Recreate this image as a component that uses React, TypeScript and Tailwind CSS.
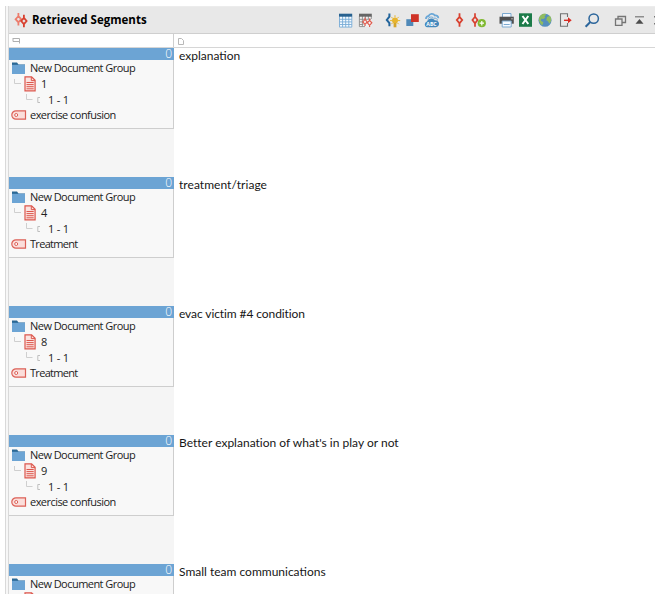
import React from "react";

type IconProps = { className?: string; children: React.ReactNode };

function Icon({ className = "", children }: IconProps) {
  return (
    <svg viewBox="0 0 16 16" fill="none" className={`h-4 w-4 shrink-0 ${className}`}>
      {children}
    </svg>
  );
}

const RED = "#d8402f";

function LogoIcon() {
  return (
    <Icon className="ml-[5px]">
      <path d="M4.4 1v3.4M4.4 10.2v3.4M4.4 4.2 7.2 7.2l-2.8 3.2-2.8-3.2z" stroke="#ec7c6c" strokeWidth="1.8" />
      <path d="M9.9 2.8v3.2M9.9 12.2v3M9.9 5.9l2.7 3.1-2.7 3.2L7.2 9z" stroke={RED} strokeWidth="1.8" />
    </Icon>
  );
}

function Toolbar() {
  return (
    <div className="flex h-[28px] items-center border-y border-t-[#ececec] border-b-[#cfcfcf] bg-[#e8e8e8]">
      <LogoIcon />
      <h1 className="ml-[2px] w-[306px] whitespace-nowrap text-[11.5px] leading-none font-bold text-black">
        <span className="tracking-[0.01px]">Retrieved Segments</span>
      </h1>
      <Icon>
        <path d="M1.5 2h12.3v13H1.5z" fill="#f5faff" />
        <path d="M1.5 4.5v10.6h12.3V4.5M4.6 4v11M7.7 4v11M10.8 4v11M1.5 7.3h12.3M1.5 9.9h12.3M1.5 12.5h12.3" stroke="#78abd6" strokeWidth=".9" />
        <path d="M1 1.7h13.2v3H1z" fill="#28618f" />
      </Icon>
      <Icon className="ml-[4px]">
        <path d="M1.4 2h12v12.6h-12z" fill="#f2f2f2" />
        <path d="M1.4 4v10.6H7M4.4 4v10.6M7.4 4v4M10.4 4v3M13.3 4v3M1.4 7.3H13M1.4 9.9h4M1.4 12.5h4" stroke="#8b8b8b" strokeWidth=".9" />
        <path d="M1 1.7h12.8v3H1z" fill="#666" />
        <path d="M7 5.5v2M7 12v2M7 7.4l2.2 2.5L7 12.4 4.8 9.9zM11.6 6.5v2M11.6 13v2M11.6 8.3l2.2 2.5-2.2 2.5-2.2-2.5z" stroke="#e15b4d" strokeWidth="1.2" />
      </Icon>
      <Icon className="ml-[11px]">
        <path d="M4.4 1.5v3.2L1.8 8l2.6 3v3.3" stroke="#22649b" strokeWidth="2" />
        <circle cx="10" cy="8.6" r="3" fill="#e7b52f" />
        <path d="M8.6 11h2.8v4.3H8.6z" fill="#d4a52b" />
        <path d="M10 3.2v2M5 8.6h2M13 8.6h2.2M6.3 4.9l1.4 1.4M13.7 4.9l-1.4 1.4M6.3 12.2l1.3-1.3M13.7 12.2l-1.3-1.3" stroke="#e7b52f" />
      </Icon>
      <Icon className="ml-[3px]">
        <path d="M2.3 7.2h7V14h-7z" fill="#5089b8" />
        <path d="M7 2.2h7.8V10H7z" fill="#cf3327" />
      </Icon>
      <Icon className="ml-[4px]">
        <path d="M2 7C1.8 5 3.2 4 4.5 4.3 5.4 1.4 9.3 1 10.8 3.4c2-.4 3.6 1 3.5 2.9" stroke="#6aa7d7" strokeWidth="1.8" />
        <path d="M3.2 15.2C.2 15.2-.1 10.4 3 9.4 4 6.4 8.7 5.2 10.8 8.2c5.4-.4 5.6 7 1 7z" fill="#4589bd" />
        <path d="M4 7.5c.7-3 4.6-3 5.5-1.3 2.5-.5 4 .8 4 2.3" stroke="#6aa7d7" />
        <text x="2.3" y="13.7" fontSize="5.2" fontWeight="700" fill="white" fontFamily="Open Sans, sans-serif">ABC</text>
      </Icon>
      <Icon className="ml-[12px]">
        <path d="M7.5 1.3v3.8M7.5 10.8v3.9M7.5 4.8 10.2 8l-2.7 3.3L4.8 8z" stroke={RED} strokeWidth="1.8" />
      </Icon>
      <Icon className="ml-[3px]">
        <path d="M4 1.3v3.8M4 10.8v3.9M4 4.8 6.6 8 4 11.3 1.4 8z" stroke={RED} strokeWidth="1.7" />
        <circle cx="10.8" cy="11.2" r="4.1" fill="#80b932" />
        <path d="M8.6 11.2H13M10.8 9v4.4" stroke="white" strokeWidth="1.2" />
      </Icon>
      <Icon className="ml-[12px]">
        <path d="M3.5 1.5h8.5v4H3.5z" fill="#f4f9ff" stroke="#7ba9cf" />
        <path d="M.5 4.7h14.3v7H.5z" fill="#505050" />
        <path d="M3.2 9h9v6h-9z" fill="#f6faff" stroke="#7ba9cf" />
        <path d="M4.7 12.5h6" stroke="#7ba9cf" />
        <path d="M12.5 6.8h1" stroke="white" />
      </Icon>
      <Icon className="ml-[4px]">
        <path d="M0 1.3h13v13.5H0z" fill="#1c7b49" />
        <path d="m3.5 4 5.8 8M9.3 4l-5.8 8" stroke="white" strokeWidth="2" />
      </Icon>
      <Icon className="ml-[2px]">
        <circle cx="8" cy="8.3" r="6.5" fill="#558fbe" />
        <path d="M3 4c2-2.5 4.8-2.6 6.2-1.8L7.5 4.4l.8 1.3-2 1.4-2-.4-.4 2 2.5 1.5-1 3C2.7 12.3.5 7.5 3 4M10 5l3-1.2c1.8 2.4 1.6 5.6-.5 8L10.7 9l-1.4-.8z" fill="#91bc60" />
      </Icon>
      <Icon className="ml-[4px]">
        <path d="M10.5 5V1.8h-7v12.4h7V11" stroke="#707070" strokeWidth="1.1" />
        <path d="M7 8.3h5" stroke="#d92c23" strokeWidth="1.4" />
        <path d="m11 5.3 3.7 3L11 11.3z" fill="#d92c23" />
      </Icon>
      <Icon className="ml-[11px]">
        <circle cx="9.7" cy="6.6" r="4.7" stroke="#2b659b" strokeWidth="1.5" />
        <path d="m6.3 10-4.7 4.8" stroke="#2b659b" strokeWidth="2" />
      </Icon>
      <Icon className="ml-[12px]">
        <path d="M6 7V4.5h7.5v6H10M3.5 7H10v6.3H3.5z" stroke="#757575" strokeWidth="1.3" />
      </Icon>
      <Icon className="ml-[4px]">
        <path d="M3 4.8h9" stroke="#777" strokeWidth="1.2" />
        <path d="m7.5 7 4 4.8h-8z" fill="#4c4c4c" />
      </Icon>
      <svg viewBox="0 0 2 16" className="ml-[5px] h-4 w-[2px] shrink-0">
        <path d="M1 4h1v1.5H1zM1 11h1v1.5H1z" fill="#777" />
      </svg>
    </div>
  );
}

function ColumnHeader() {
  return (
    <div className="flex h-[14px] border-b border-[#d6d6d6] bg-white">
      <div className="w-[165px] border-r border-[#cfcfcf] pl-[3px]">
        <svg viewBox="0 0 9 13" fill="none" className="h-[13px] w-[9px]">
          <path d="M1 4.5h6.5v5M1 4v3.5h6.5" stroke="#b0b0b0" />
        </svg>
      </div>
      <div className="pl-[3px]">
        <svg viewBox="0 0 9 13" fill="none" className="h-[13px] w-[9px]">
          <path d="M1.5 4.5h3l2 2v4h-5z" stroke="#b8b8b8" />
        </svg>
      </div>
    </div>
  );
}

type Segment = { doc?: string; code?: string; text: string; tracking: string };

const segments: Segment[] = [
  { doc: "1", code: "exercise confusion", text: "explanation", tracking: "tracking-normal" },
  { doc: "4", code: "Treatment", text: "treatment/triage", tracking: "tracking-[0.04px]" },
  { doc: "8", code: "Treatment", text: "evac victim #4 condition", tracking: "tracking-[-0.09px]" },
  { doc: "9", code: "exercise confusion", text: "Better explanation of what's in play or not", tracking: "tracking-[0.01px]" },
  { text: "Small team communications", tracking: "tracking-normal" },
];

function SegmentRow({ segment }: { segment: Segment }) {
  return (
    <div className="flex h-[129px] shrink-0">
      <div className="w-[165px] shrink-0 bg-[#f5f5f5]">
        <div className="h-[81px] border-r border-b border-[#cecece] bg-[#f8f8f8] text-[11px] leading-4 tracking-[-0.54px] text-[#222]">
          <div className="-mr-px h-3 bg-[#6ca4d4] pr-[2px] text-right text-[12px] leading-3 font-light tracking-normal text-white">0</div>
          <div className="flex h-4 items-center">
            <svg viewBox="0 0 14 12" className="ml-[3px] h-3 w-[14px]">
              <path d="M0 .6h5l1.5 1.9H13v3H0z" fill="#2a6895" />
              <path d="M0 2.8h13v9.2H0z" fill="#6ca4d4" />
            </svg>
            <span className="ml-[4px]">New Document Group</span>
          </div>
          <div className="flex h-4 items-center">
            <svg viewBox="0 0 7 12" fill="none" className="ml-[5px] h-3 w-[7px]">
              <path d="M.5 1v4.5H7" stroke="#cfcfcf" />
            </svg>
            <svg viewBox="0 0 12 16" fill="none" className="ml-[3px] h-4 w-3">
              <path d="M1 .8h6.6l3.5 3.5v10.5H1z" fill="#fbe3e0" stroke="#dc574d" strokeWidth="1.2" />
              <path d="M7.3 1v3.6H11M2.5 6.5h7.2M2.5 8.6h7.2M2.5 10.7h7.2M2.5 12.8h7.2" stroke="#dc574d" />
            </svg>
            {segment.doc && <span className="ml-[5px]">{segment.doc}</span>}
          </div>
          {segment.code && (
            <>
              <div className="flex h-4 items-center">
                <svg viewBox="0 0 7 14" fill="none" className="ml-[17px] h-[14px] w-[7px]">
                  <path d="M.5 1v5.5h6" stroke="#cfcfcf" />
                </svg>
                <svg viewBox="0 0 4 8" fill="none" className="ml-[4px] h-2 w-1">
                  <path d="M3 1.5H.8v5H3" stroke="#b9b9b9" strokeWidth=".9" />
                </svg>
                <span className="ml-[7px] tracking-[-0.2px]">1 - 1</span>
              </div>
              <div className="-mt-px flex h-4 items-center">
                <svg viewBox="0 0 16 12" fill="none" className="ml-[2px] h-3 w-4">
                  <path d="M14.5 1.8v8.4H5a4.2 4.2 0 0 1 0-8.4z" fill="#fbdedb" stroke="#dc6057" strokeWidth="1.2" />
                  <circle cx="5.2" cy="6" r="1.5" fill="white" stroke="#dc6057" />
                </svg>
                <span className={segment.code === "Treatment" ? "ml-[3px] tracking-[-0.7px]" : "ml-[3px]"}>{segment.code}</span>
              </div>
            </>
          )}
        </div>
      </div>
      <p className={`pl-[5px] text-[12px] leading-[15px] whitespace-nowrap text-[#161616] font-["Lato",sans-serif] ${segment.tracking}`}>
        {segment.text}
      </p>
    </div>
  );
}

export default function App() {
  return (
    <div className="h-[596px] w-[670px] overflow-hidden bg-white pt-[6px] pl-[5px] font-['Open_Sans','Noto_Sans',sans-serif]">
      <div className="flex h-[588px] w-[650px] overflow-hidden">
        <div className="w-1 shrink-0 border-x border-l-[#d9d9d9] border-r-[#d9d9d9] bg-[#f7f7f7]" />
        <main className="min-w-0 flex-1 overflow-hidden">
          <Toolbar />
          <ColumnHeader />
          {segments.map((segment) => (
            <SegmentRow key={segment.text} segment={segment} />
          ))}
        </main>
      </div>
    </div>
  );
}
